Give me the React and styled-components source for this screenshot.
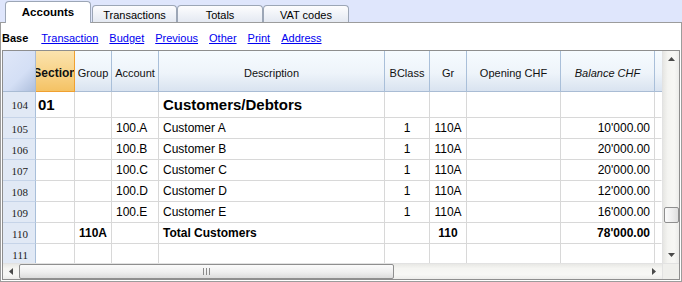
import React from "react";
import styled, { createGlobalStyle, css } from "styled-components";

const Global = createGlobalStyle`
  html, body { margin: 0; padding: 0; background: #fff; }
  body { font-family: "Liberation Sans", Arial, sans-serif; }
  * { box-sizing: border-box; }
`;

const Window = styled.div`
  width: 682px;
  height: 282px;
  background: #fff;
  overflow: hidden;
  display: flex;
  flex-direction: column;
`;

const TabBar = styled.div`
  height: 23px;
  background: #dfe6fc;
  border-bottom: 1px solid #9c9c9c;
  display: flex;
  align-items: flex-end;
  padding-left: 5px;
`;

const Tab = styled.div`
  width: ${(p) => p.$w}px;
  height: 17px;
  border: 1px solid #9ca6b6;
  border-bottom: none;
  border-radius: 4px 4px 0 0;
  background: linear-gradient(#fdfdfe, #e4e9f2);
  font-size: 11px;
  color: #000;
  display: flex;
  align-items: center;
  justify-content: center;
  padding-top: 1px;
  ${(p) =>
    p.$active &&
    css`
      height: 22px;
      margin-bottom: -1px;
      margin-right: 1px;
      background: #fff;
      font-weight: bold;
      font-size: 11.5px;
      padding-top: 0;
      padding-bottom: 2px;
      position: relative;
    `}
`;

const Panel = styled.div`
  height: 259px;
  border: 1px solid #9c9c9c;
  border-top: none;
  display: flex;
  flex-direction: column;
`;

const LinkBar = styled.div`
  height: 26px;
  display: flex;
  align-items: center;
  gap: 11px;
  padding: 3px 0 0 1px;
  font-size: 11px;
`;

const BaseLabel = styled.span`
  font-weight: bold;
  color: #000;
  margin-right: 2px;
`;

const Link = styled.a`
  color: #0000f0;
  text-decoration: underline;
  cursor: pointer;
`;

const Frame = styled.div`
  height: 230px;
  margin: 1px 1px 0 1px;
  border: 1px solid #8e8e8e;
  display: grid;
  grid-template-columns: 1fr 17px;
  grid-template-rows: 1fr 16px;
`;

const TableArea = styled.div`
  overflow: hidden;
  display: flex;
  flex-direction: column;
`;

const COLS = "33px 39px 37px 47px 226px 45px 37px 94px 94px 1fr";

const Row = styled.div`
  display: grid;
  grid-template-columns: ${COLS};
  height: ${(p) => p.$h}px;
  flex-shrink: 0;
`;

const HeadCell = styled.div`
  display: flex;
  align-items: center;
  justify-content: center;
  padding-top: 3px;
  overflow: hidden;
  white-space: nowrap;
  font-size: 11px;
  color: #111;
  background: linear-gradient(#f6fbff, #eef4fa 55%, #d9e3f0);
  border-right: 1px solid #a9bfd9;
  border-bottom: 1px solid #a9bcd4;
  font-style: ${(p) => (p.$italic ? "italic" : "normal")};
  ${(p) =>
    p.$section &&
    css`
      background: linear-gradient(#fbe3ae, #f8d388 55%, #f4c264);
      border-right: 1px solid #f0a030;
      border-bottom: 1px solid #f0a030;
      font-weight: bold;
      font-size: 12px;
    `}
  ${(p) =>
    p.$corner &&
    css`
      background: linear-gradient(135deg, #dfe7f8 0%, #d4dff5 60%, #aebfdd 100%);
      border-right: 1px solid #a9bcd4;
    `}
  ${(p) =>
    p.$filler &&
    css`
      border-right: none;
    `}
`;

const NumCell = styled.div`
  background: #e1e9f5;
  border-right: 1px solid #a9bfd9;
  border-bottom: 1px solid #c6d4e8;
  font-family: "Liberation Serif", "Times New Roman", serif;
  font-size: 11px;
  color: #222;
  display: flex;
  align-items: center;
  justify-content: flex-end;
  padding: 1px 7px 0 0;
`;

const Cell = styled.div`
  border-right: 1px solid ${(p) => (p.$filler ? "transparent" : "#d8d8d8")};
  border-bottom: 1px solid #d8d8d8;
  display: flex;
  align-items: center;
  justify-content: ${(p) =>
    p.$align === "right" ? "flex-end" : p.$align === "center" ? "center" : "flex-start"};
  padding: ${(p) =>
    p.$align === "right" ? "0 4px 0 0" : p.$align === "center" ? "0" : `0 0 0 ${p.$pad ?? 4}px`};
  font-size: ${(p) => (p.$big ? "15px" : "12px")};
  font-weight: ${(p) => (p.$bold || p.$big ? "bold" : "normal")};
  color: #000;
  white-space: nowrap;
  overflow: hidden;
`;

const VScroll = styled.div`
  background: linear-gradient(90deg, #e6e6e3, #f4f4f1 30%, #f7f7f5 70%, #ececea);
  border-left: 1px solid #e2e2e2;
  display: flex;
  flex-direction: column;
  align-items: center;
`;

const ArrowBtn = styled.div`
  width: 16px;
  height: 16px;
  display: flex;
  align-items: center;
  justify-content: center;
  flex-shrink: 0;
`;

const VTrack = styled.div`
  flex: 1;
  width: 100%;
  display: flex;
  flex-direction: column;
  justify-content: flex-end;
  padding-bottom: 24px;
  align-items: center;
`;

const VThumb = styled.div`
  width: 15px;
  height: 16px;
  border: 1px solid #8f8f8f;
  border-radius: 2px;
  background: linear-gradient(90deg, #fbfbfb, #ececec 60%, #dedede);
`;

const HScroll = styled.div`
  background: linear-gradient(#e8e8e5, #f5f5f2 30%, #f7f7f5 70%, #ececea);
  border-top: 1px solid #e2e2e2;
  display: flex;
  align-items: center;
`;

const HTrack = styled.div`
  flex: 1;
  height: 100%;
  display: flex;
  align-items: center;
`;

const HThumb = styled.div`
  width: 375px;
  height: 15px;
  border: 1px solid #8f8f8f;
  border-radius: 2px;
  background: linear-gradient(#fbfbfb, #efefef 55%, #dcdcdc);
  display: flex;
  align-items: center;
  justify-content: center;
`;

const Corner = styled.div`
  background: #efefec;
  border-top: 1px solid #e2e2e2;
  border-left: 1px solid #e2e2e2;
`;

const Arrow = ({ dir }) => {
  const pts = {
    up: "0,4 3.5,0 7,4",
    down: "0,0 7,0 3.5,4",
    left: "4,0 4,7 0,3.5",
    right: "0,0 0,7 4,3.5",
  }[dir];
  const vertical = dir === "up" || dir === "down";
  return (
    <svg width={vertical ? 7 : 4} height={vertical ? 4 : 7} viewBox={vertical ? "0 0 7 4" : "0 0 4 7"}>
      <polygon points={pts} fill="#4a4a4a" />
    </svg>
  );
};

const Grip = () => (
  <svg width="7" height="7" viewBox="0 0 7 7">
    <rect x="0" y="0" width="1" height="7" fill="#8a8a8a" />
    <rect x="3" y="0" width="1" height="7" fill="#8a8a8a" />
    <rect x="6" y="0" width="1" height="7" fill="#8a8a8a" />
  </svg>
);

const rows = [
  { n: 105, acc: "100.A", desc: "Customer A", bc: "1", gr: "110A", bal: "10'000.00" },
  { n: 106, acc: "100.B", desc: "Customer B", bc: "1", gr: "110A", bal: "20'000.00" },
  { n: 107, acc: "100.C", desc: "Customer C", bc: "1", gr: "110A", bal: "20'000.00" },
  { n: 108, acc: "100.D", desc: "Customer D", bc: "1", gr: "110A", bal: "12'000.00" },
  { n: 109, acc: "100.E", desc: "Customer E", bc: "1", gr: "110A", bal: "16'000.00" },
];

export default function App() {
  return (
    <>
      <Global />
      <Window>
        <TabBar>
          <Tab $active $w={86}>Accounts</Tab>
          <Tab $w={85}>Transactions</Tab>
          <Tab $w={86}>Totals</Tab>
          <Tab $w={86}>VAT codes</Tab>
        </TabBar>
        <Panel>
          <LinkBar>
            <BaseLabel>Base</BaseLabel>
            <Link>Transaction</Link>
            <Link>Budget</Link>
            <Link>Previous</Link>
            <Link>Other</Link>
            <Link>Print</Link>
            <Link>Address</Link>
          </LinkBar>
          <Frame>
            <TableArea>
              <Row $h={41}>
                <HeadCell $corner />
                <HeadCell $section>Section</HeadCell>
                <HeadCell>Group</HeadCell>
                <HeadCell>Account</HeadCell>
                <HeadCell>Description</HeadCell>
                <HeadCell>BClass</HeadCell>
                <HeadCell>Gr</HeadCell>
                <HeadCell>Opening CHF</HeadCell>
                <HeadCell $italic>Balance CHF</HeadCell>
                <HeadCell $filler />
              </Row>
              <Row $h={26}>
                <NumCell>104</NumCell>
                <Cell $big $pad={2}>01</Cell>
                <Cell />
                <Cell />
                <Cell $big>Customers/Debtors</Cell>
                <Cell />
                <Cell />
                <Cell />
                <Cell />
                <Cell $filler />
              </Row>
              {rows.map((r) => (
                <Row $h={21} key={r.n}>
                  <NumCell>{r.n}</NumCell>
                  <Cell />
                  <Cell />
                  <Cell>{r.acc}</Cell>
                  <Cell>{r.desc}</Cell>
                  <Cell $align="center">{r.bc}</Cell>
                  <Cell $align="center">{r.gr}</Cell>
                  <Cell />
                  <Cell $align="right">{r.bal}</Cell>
                  <Cell $filler />
                </Row>
              ))}
              <Row $h={21}>
                <NumCell>110</NumCell>
                <Cell />
                <Cell $bold $align="center">110A</Cell>
                <Cell />
                <Cell $bold>Total Customers</Cell>
                <Cell />
                <Cell $bold $align="center">110</Cell>
                <Cell />
                <Cell $bold $align="right">78'000.00</Cell>
                <Cell $filler />
              </Row>
              <Row $h={21}>
                <NumCell>111</NumCell>
                <Cell />
                <Cell />
                <Cell />
                <Cell />
                <Cell />
                <Cell />
                <Cell />
                <Cell />
                <Cell $filler />
              </Row>
            </TableArea>
            <VScroll>
              <ArrowBtn><Arrow dir="up" /></ArrowBtn>
              <VTrack>
                <VThumb />
              </VTrack>
              <ArrowBtn><Arrow dir="down" /></ArrowBtn>
            </VScroll>
            <HScroll>
              <ArrowBtn><Arrow dir="left" /></ArrowBtn>
              <HTrack>
                <HThumb><Grip /></HThumb>
              </HTrack>
              <ArrowBtn><Arrow dir="right" /></ArrowBtn>
            </HScroll>
            <Corner />
          </Frame>
        </Panel>
      </Window>
    </>
  );
}
